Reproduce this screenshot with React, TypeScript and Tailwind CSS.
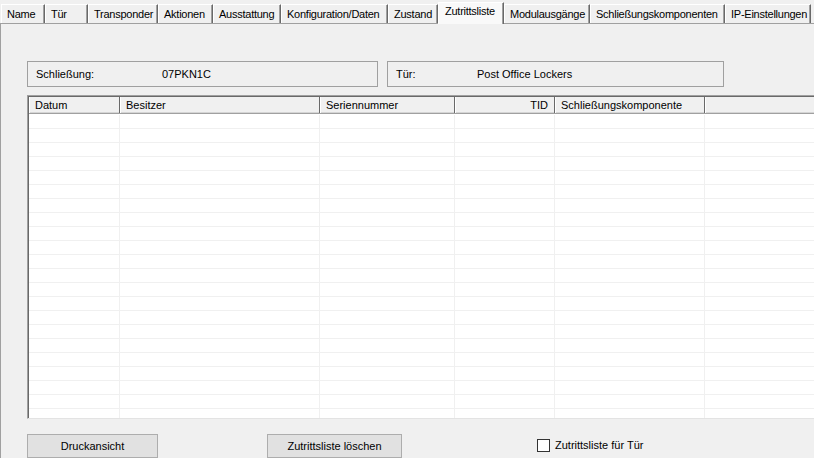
import React from "react";

const tabs: { label: string; w: number; selected?: boolean }[] = [
  { label: "Name", w: 44 },
  { label: "Tür", w: 43 },
  { label: "Transponder", w: 70 },
  { label: "Aktionen", w: 55 },
  { label: "Ausstattung", w: 68 },
  { label: "Konfiguration/Daten", w: 107 },
  { label: "Zustand", w: 50 },
  { label: "Zutrittsliste", w: 66, selected: true },
  { label: "Modulausgänge", w: 86 },
  { label: "Schließungskomponenten", w: 135 },
  { label: "IP-Einstellungen", w: 86 },
];

const cols: { label: string; w: number; right?: boolean }[] = [
  { label: "Datum", w: 91 },
  { label: "Besitzer", w: 200 },
  { label: "Seriennummer", w: 135 },
  { label: "TID", w: 100, right: true },
  { label: "Schließungskomponente", w: 150 },
];

export default function App() {
  const rows = Array.from({ length: 22 });
  return (
    <div
      className="w-[814px] h-[458px] overflow-hidden bg-[#f0f0f0] text-[11px] text-black flex flex-col"
      style={{ fontFamily: '"Liberation Sans", Arial, sans-serif' }}
    >
      {/* Tab strip */}
      <div className="h-[23px] flex items-end pl-[1px] shrink-0 relative z-10">
        {tabs.map((t) =>
          t.selected ? (
            <div
              key={t.label}
              className="h-[22px] -mb-px bg-[#f9f9f9] border-t border-l border-white border-r border-r-[#696969] shadow-[inset_-1px_0_0_#a0a0a0] pl-[6px] pt-[2px] leading-[13px] tracking-[-0.25px] whitespace-nowrap overflow-hidden shrink-0"
              style={{ width: t.w }}
            >
              {t.label}
            </div>
          ) : (
            <div
              key={t.label}
              className="h-[19px] bg-[#f0f0f0] border-t border-l border-white border-r border-r-[#696969] shadow-[inset_-1px_0_0_#a0a0a0] pl-[5px] pt-[3px] leading-[13px] tracking-[-0.25px] whitespace-nowrap overflow-hidden shrink-0"
              style={{ width: t.w }}
            >
              {t.label}
            </div>
          )
        )}
      </div>

      {/* Panel */}
      <div className="flex-1 border-t border-l border-[#a0a0a0] flex flex-col pl-[26px] pt-[37px]">
        {/* Info boxes */}
        <div className="flex gap-[9px] shrink-0">
          <div className="w-[351px] h-[26px] border border-[#a0a0a0] flex items-center pl-[8px]">
            <span className="w-[126px]">Schließung:</span>
            <span>07PKN1C</span>
          </div>
          <div className="w-[337px] h-[26px] border border-[#a0a0a0] flex items-center pl-[8px]">
            <span className="w-[81px]">Tür:</span>
            <span>Post Office Lockers</span>
          </div>
        </div>

        {/* Table */}
        <div className="mt-[8px] w-[800px] h-[324px] shrink-0 border-t border-l border-[#a0a0a0] border-b border-b-[#e3e3e3] bg-white flex flex-col overflow-hidden">
          <div className="flex-1 border-t border-l border-[#696969] flex flex-col overflow-hidden">
            {/* header */}
            <div className="flex h-[17px] shrink-0 bg-[#f0f0f0] border-b border-[#a0a0a0] shadow-[inset_0_-1px_0_#d5d5d5]">
              {cols.map((c) => (
                <div
                  key={c.label}
                  className={`h-full border-r border-[#696969] shadow-[inset_1px_0_0_#ffffff] flex items-center px-[6px] whitespace-nowrap shrink-0 ${
                    c.right ? "justify-end" : "justify-start"
                  }`}
                  style={{ width: c.w }}
                >
                  {c.label}
                </div>
              ))}
              <div className="flex-1 h-full shadow-[inset_1px_0_0_#ffffff]" />
            </div>
            {/* body */}
            <div className="flex-1 flex flex-col pt-px">
              {rows.map((_, i) => (
                <div key={i} className="flex h-[14px] shrink-0 border-b border-[#f0f0f0]">
                  {cols.map((c) => (
                    <div
                      key={c.label}
                      className="h-full border-r border-[#f0f0f0] shrink-0"
                      style={{ width: c.w }}
                    />
                  ))}
                  <div className="flex-1" />
                </div>
              ))}
            </div>
          </div>
        </div>

        {/* Buttons */}
        <div className="mt-[15px] flex items-start shrink-0">
          <div className="w-[131px] h-[24px] bg-[#e1e1e1] border border-[#adadad] flex items-center justify-center">
            Druckansicht
          </div>
          <div className="ml-[109px] w-[135px] h-[24px] bg-[#e1e1e1] border border-[#adadad] flex items-center justify-center">
            Zutrittsliste löschen
          </div>
          <div className="ml-[135px] mt-[3px] flex items-center gap-[5px]">
            <div className="w-[13px] h-[13px] border border-[#333333] bg-white" />
            <span>Zutrittsliste für Tür</span>
          </div>
        </div>
      </div>
    </div>
  );
}
